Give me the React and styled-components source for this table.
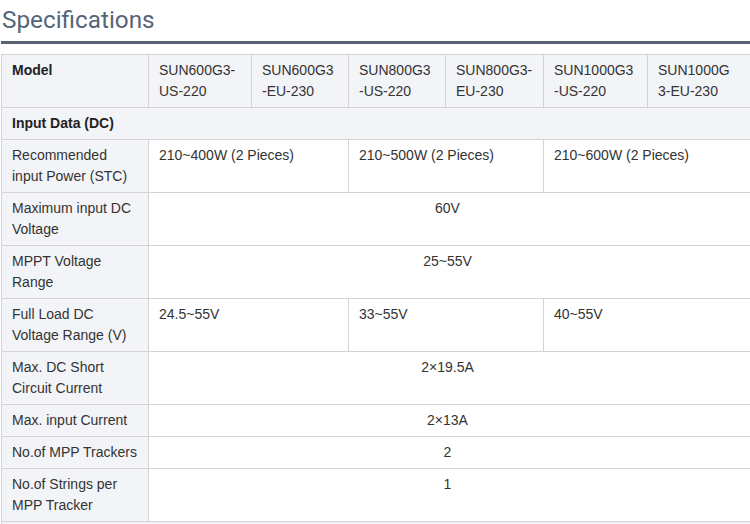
import React from "react";
import styled, { createGlobalStyle } from "styled-components";

const GlobalStyle = createGlobalStyle`
  html, body {
    margin: 0;
    padding: 0;
    background: #fff;
    overflow: hidden;
  }
`;

const Page = styled.div`
  padding: 0 0 0 1px;
  width: 760px;
`;

const Heading = styled.h2`
  margin: 0;
  padding: 5px 0 7px 1px;
  font-family: Roboto, "Liberation Sans", sans-serif;
  font-weight: 400;
  font-size: 24.3px;
  line-height: 29px;
  color: #56657a;
  border-bottom: 3px solid #566172;
  width: 749px;
`;

const TableWrap = styled.div`
  margin-top: 10px;
  width: 749px;
  overflow: hidden;
`;

const Table = styled.table`
  border-collapse: collapse;
  table-layout: fixed;
  width: 752px;
  font-family: "Liberation Sans", Arial, sans-serif;
  font-size: 14px;
  line-height: 21px;
  color: #333;
`;

const Cell = styled.td`
  border: 1px solid #d3d3d6;
  padding: 5px 10px 5px 10px;
  vertical-align: top;
  text-align: ${(p) => (p.$center ? "center" : "left")};
  background: ${(p) => (p.$grey ? "#f3f4f7" : "#fff")};
  font-weight: ${(p) => (p.$bold ? "700" : "400")};
  color: ${(p) => (p.$bold ? "#222" : "#333")};
  word-break: break-all;

  &:last-child {
    padding-right: 16px;
  }
`;

const LabelCell = styled(Cell)`
  word-break: normal;
`;

const widths = [147, 103, 97, 97, 98, 104, 105];

const models = [
  "SUN600G3-US-220",
  "SUN600G3-EU-230",
  "SUN800G3-US-220",
  "SUN800G3-EU-230",
  "SUN1000G3-US-220",
  "SUN1000G3-EU-230",
];

const rows = [
  {
    label: "Recommended input Power (STC)",
    split: ["210~400W (2 Pieces)", "210~500W (2 Pieces)", "210~600W (2 Pieces)"],
  },
  { label: "Maximum input DC Voltage", value: "60V" },
  { label: "MPPT Voltage Range", value: "25~55V" },
  {
    label: "Full Load DC Voltage Range (V)",
    split: ["24.5~55V", "33~55V", "40~55V"],
  },
  { label: "Max. DC Short Circuit Current", value: "2×19.5A" },
  { label: "Max. input Current", value: "2×13A" },
  { label: "No.of MPP Trackers", value: "2" },
  { label: "No.of Strings per MPP Tracker", value: "1" },
];

export default function App() {
  return (
    <Page>
      <GlobalStyle />
      <Heading>Specifications</Heading>
      <TableWrap>
        <Table>
          <colgroup>
            {widths.map((w, i) => (
              <col key={i} style={{ width: w }} />
            ))}
          </colgroup>
          <tbody>
            <tr>
              <LabelCell $grey $bold>Model</LabelCell>
              {models.map((m) => (
                <Cell key={m} $grey>{m}</Cell>
              ))}
            </tr>
            <tr>
              <LabelCell $grey $bold colSpan={7}>Input Data (DC)</LabelCell>
            </tr>
            {rows.map((r) => (
              <tr key={r.label}>
                <LabelCell $grey>{r.label}</LabelCell>
                {r.split ? (
                  r.split.map((s, i) => (
                    <Cell key={i} colSpan={2}>{s}</Cell>
                  ))
                ) : (
                  <Cell colSpan={6} $center>{r.value}</Cell>
                )}
              </tr>
            ))}
            <tr>
              <LabelCell $grey colSpan={7}>&nbsp;</LabelCell>
            </tr>
          </tbody>
        </Table>
      </TableWrap>
    </Page>
  );
}
